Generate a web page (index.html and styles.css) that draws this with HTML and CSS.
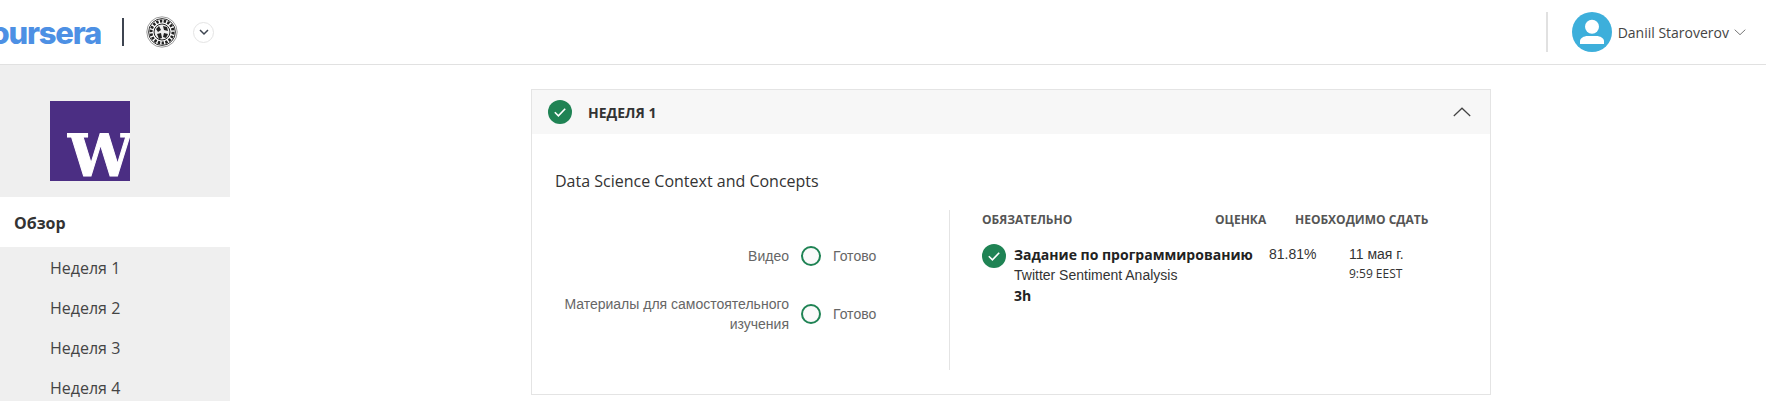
FILE: index.html
```html
<!DOCTYPE html>
<html lang="ru">
<head>
<meta charset="utf-8">
<title>Coursera</title>
<link rel="stylesheet" href="styles.css">
</head>
<body>
<header class="topbar">
  <div class="brand"><span class="brand-text">coursera</span></div>
  <span class="brand-sep"></span>
  <svg class="seal" viewBox="0 0 32 32" aria-hidden="true">
    <circle cx="16" cy="16" r="15.2" fill="#fff" stroke="#9a9a9a" stroke-width="1"/>
    <circle cx="16" cy="16" r="13.4" fill="none" stroke="#333" stroke-width="1"/>
    <circle cx="16" cy="16" r="11" fill="none" stroke="#222" stroke-width="3" stroke-dasharray="2.4 1.4"/>
    <circle cx="16" cy="16" r="8" fill="#eee" stroke="#222" stroke-width="1"/>
    <path d="M10 13l3-3 2 4-3 2zM17 10l4 1 1 4-4-1zM11 18l4-1 1 5-3 1zM18 17l4 1-2 4-3-1z" fill="#222"/>
  </svg>
  <button class="switch" type="button" aria-label="Меню">
    <svg viewBox="0 0 12 8"><path d="M2 2l4 4 4-4" fill="none" stroke="#3d4450" stroke-width="1.5"/></svg>
  </button>
  <div class="user">
    <span class="user-sep"></span>
    <span class="avatar">
      <svg viewBox="0 0 40 40"><circle cx="20" cy="14.700" r="7" fill="#fff"/><path d="M8 32v-3c0-2.800 4-5 7.500-5h9c3.500 0 7.500 2.200 7.500 5v3z" fill="#fff"/></svg>
    </span>
    <span class="user-name">Daniil Staroverov</span>
    <svg class="user-chev" viewBox="0 0 12 7"><path d="M.7.7L6 5.700 11.300.7" fill="none" stroke="#777" stroke-width="1"/></svg>
  </div>
</header>
<div class="layout">
  <aside class="sidebar">
    <div class="logo-wrap"><div class="logo"><span class="logo-w">W</span></div></div>
    <div class="nav-active">Обзор</div>
    <ul class="nav">
      <li>Неделя 1</li>
      <li>Неделя 2</li>
      <li>Неделя 3</li>
      <li>Неделя 4</li>
    </ul>
  </aside>
  <main class="main">
    <section class="card">
      <div class="card-head">
        <svg class="check" viewBox="0 0 24 24"><circle cx="12" cy="12" r="12" fill="#1f8354"/><path d="M6.800 12.300l3.600 3.500 6.800-7" fill="none" stroke="#fff" stroke-width="1.600"/></svg>
        <h2 class="card-title">НЕДЕЛЯ 1</h2>
        <svg class="collapse" viewBox="0 0 18 10"><path d="M.8 9L9 1.200 17.200 9" fill="none" stroke="#444" stroke-width="1.200"/></svg>
      </div>
      <div class="card-body">
        <h3 class="module">Data Science Context and Concepts</h3>
        <div class="cols">
          <div class="progress">
            <div class="prow">
              <span class="plabel">Видео</span>
              <span class="ring"></span>
              <span class="pstatus">Готово</span>
            </div>
            <div class="prow">
              <span class="plabel">Материалы для самостоятельного изучения</span>
              <span class="ring"></span>
              <span class="pstatus">Готово</span>
            </div>
          </div>
          <div class="required">
            <div class="thead">
              <span class="th-req">ОБЯЗАТЕЛЬНО</span>
              <span class="th-grade">ОЦЕНКА</span>
              <span class="th-due">НЕОБХОДИМО СДАТЬ</span>
            </div>
            <div class="trow">
              <svg class="check" viewBox="0 0 24 24"><circle cx="12" cy="12" r="12" fill="#1f8354"/><path d="M6.800 12.300l3.600 3.500 6.800-7" fill="none" stroke="#fff" stroke-width="1.600"/></svg>
              <div class="task">
                <div class="task-type">Задание по программированию</div>
                <div class="task-name">Twitter Sentiment Analysis</div>
                <div class="task-time">3h</div>
              </div>
              <div class="grade">81.81%</div>
              <div class="due">
                <div class="due-date">11 мая г.</div>
                <div class="due-time">9:59 EEST</div>
              </div>
            </div>
          </div>
        </div>
      </div>
    </section>
  </main>
</div>
</body>
</html>
```
FILE: styles.css
```css
* { box-sizing: border-box; }
html, body { margin: 0; padding: 0; height: 401px; overflow: hidden; background: #fff; }
body { font-family: "Open Sans", sans-serif; color: #333; }

.topbar { display: flex; align-items: center; height: 65px; border-bottom: 1px solid #e1e1e1; background: #fff; }
.brand { width: 101px; height: 64px; overflow: hidden; display: flex; justify-content: flex-end; align-items: center; flex: none; }
.brand-text { font-family: "Inter", sans-serif; font-weight: 800; font-size: 31px; letter-spacing: -1.2px; color: #4d90e4; flex: none; }
.brand-sep { width: 2px; height: 28px; background: #3d4450; margin-left: 21px; flex: none; }
.seal { width: 32px; height: 32px; margin-left: 22px; flex: none; }
.switch { width: 21px; height: 21px; margin: 0 0 0 15px; padding: 0; border: 1px solid #e4e4e4; border-radius: 50%; background: #fff; display: flex; align-items: center; justify-content: center; }
.switch svg { width: 12px; height: 8px; }

.user { margin-left: auto; display: flex; align-items: center; margin-right: 20px; }
.user-sep { width: 2px; height: 40px; background: #e1e1e1; margin-right: 24px; }
.avatar { width: 40px; height: 40px; border-radius: 50%; background: #3dafdb; }
.avatar svg { display: block; width: 40px; height: 40px; }
.user-name { font-size: 14px; color: #444; margin-left: 6px; }
.user-chev { width: 12px; height: 7px; margin-left: 5px; }

.layout { display: flex; }
.sidebar { width: 230px; flex: none; background: #efefef; height: 336px; }
.logo-wrap { padding: 36px 50px 16px; height: 132px; }
.logo { width: 80px; height: 80px; background: #4b2e83; overflow: hidden; display: flex; align-items: flex-end; padding: 0 0 0 18px; }
.logo-w { font-family: "DejaVu Serif", serif; font-weight: 700; font-size: 58px; line-height: 50px; color: #fff; -webkit-text-stroke: 1px #fff; flex: none; }
.nav-active { height: 50px; line-height: 52px; padding-left: 14px; background: #fff; font-size: 16px; font-weight: 700; color: #333; }
.nav { list-style: none; margin: 0; padding: 1px 0 0; }
.nav li { height: 40px; line-height: 40px; padding-left: 50px; font-size: 16px; color: #444; }

.main { flex: 1; padding: 24px 0 0 301px; }
.card { width: 960px; height: 306px; border: 1px solid #e4e4e4; }
.card-head { display: flex; align-items: center; height: 44px; background: #f7f7f7; padding: 0 19px 0 16px; }
.check { width: 24px; height: 24px; flex: none; }
.card-title { margin: 0 0 0 16px; font-size: 14px; font-weight: 700; color: #333; flex: 1; }
.collapse { width: 18px; height: 10px; flex: none; }
.card-body { padding: 36px 0 0 23px; }
.module { margin: 0; font-size: 16px; line-height: 22px; font-weight: 400; color: #333; }
.cols { display: flex; margin-top: 18px; }
.progress { width: 394px; height: 160px; padding-top: 26px; display: flex; flex-direction: column; gap: 18px; flex: none; }
.prow { display: flex; align-items: center; min-height: 40px; font-family: "Liberation Sans", sans-serif; font-size: 14px; line-height: 20px; color: #666; }
.plabel { width: 234px; text-align: right; flex: none; }
.ring { width: 20px; height: 20px; border: 2px solid #1f8354; border-radius: 50%; margin: 0 12px; background: #fafafa; flex: none; }
.required { flex: 1; height: 160px; border-left: 1px solid #e4e4e4; padding: 1px 0 0 32px; }
.thead { display: flex; font-size: 12px; font-weight: 700; line-height: 18px; color: #555; }
.th-req { width: 233px; flex: none; }
.th-grade { width: 80px; flex: none; }
.trow { display: flex; margin-top: 15px; }
.task { width: 255px; margin-left: 8px; flex: none; }
.task-type { font-size: 14px; font-weight: 700; line-height: 21px; color: #222; white-space: nowrap; }
.task-name { font-family: "Liberation Sans", sans-serif; font-size: 14px; line-height: 20px; color: #333; }
.task-time { font-size: 14px; font-weight: 700; line-height: 21px; color: #222; }
.grade { width: 80px; font-family: "Liberation Sans", sans-serif; font-size: 14px; line-height: 20px; color: #333; flex: none; }
.due-date { font-family: "Liberation Sans", sans-serif; font-size: 14px; line-height: 20px; color: #333; }
.due-time { font-size: 12px; line-height: 20px; color: #333; }
```
